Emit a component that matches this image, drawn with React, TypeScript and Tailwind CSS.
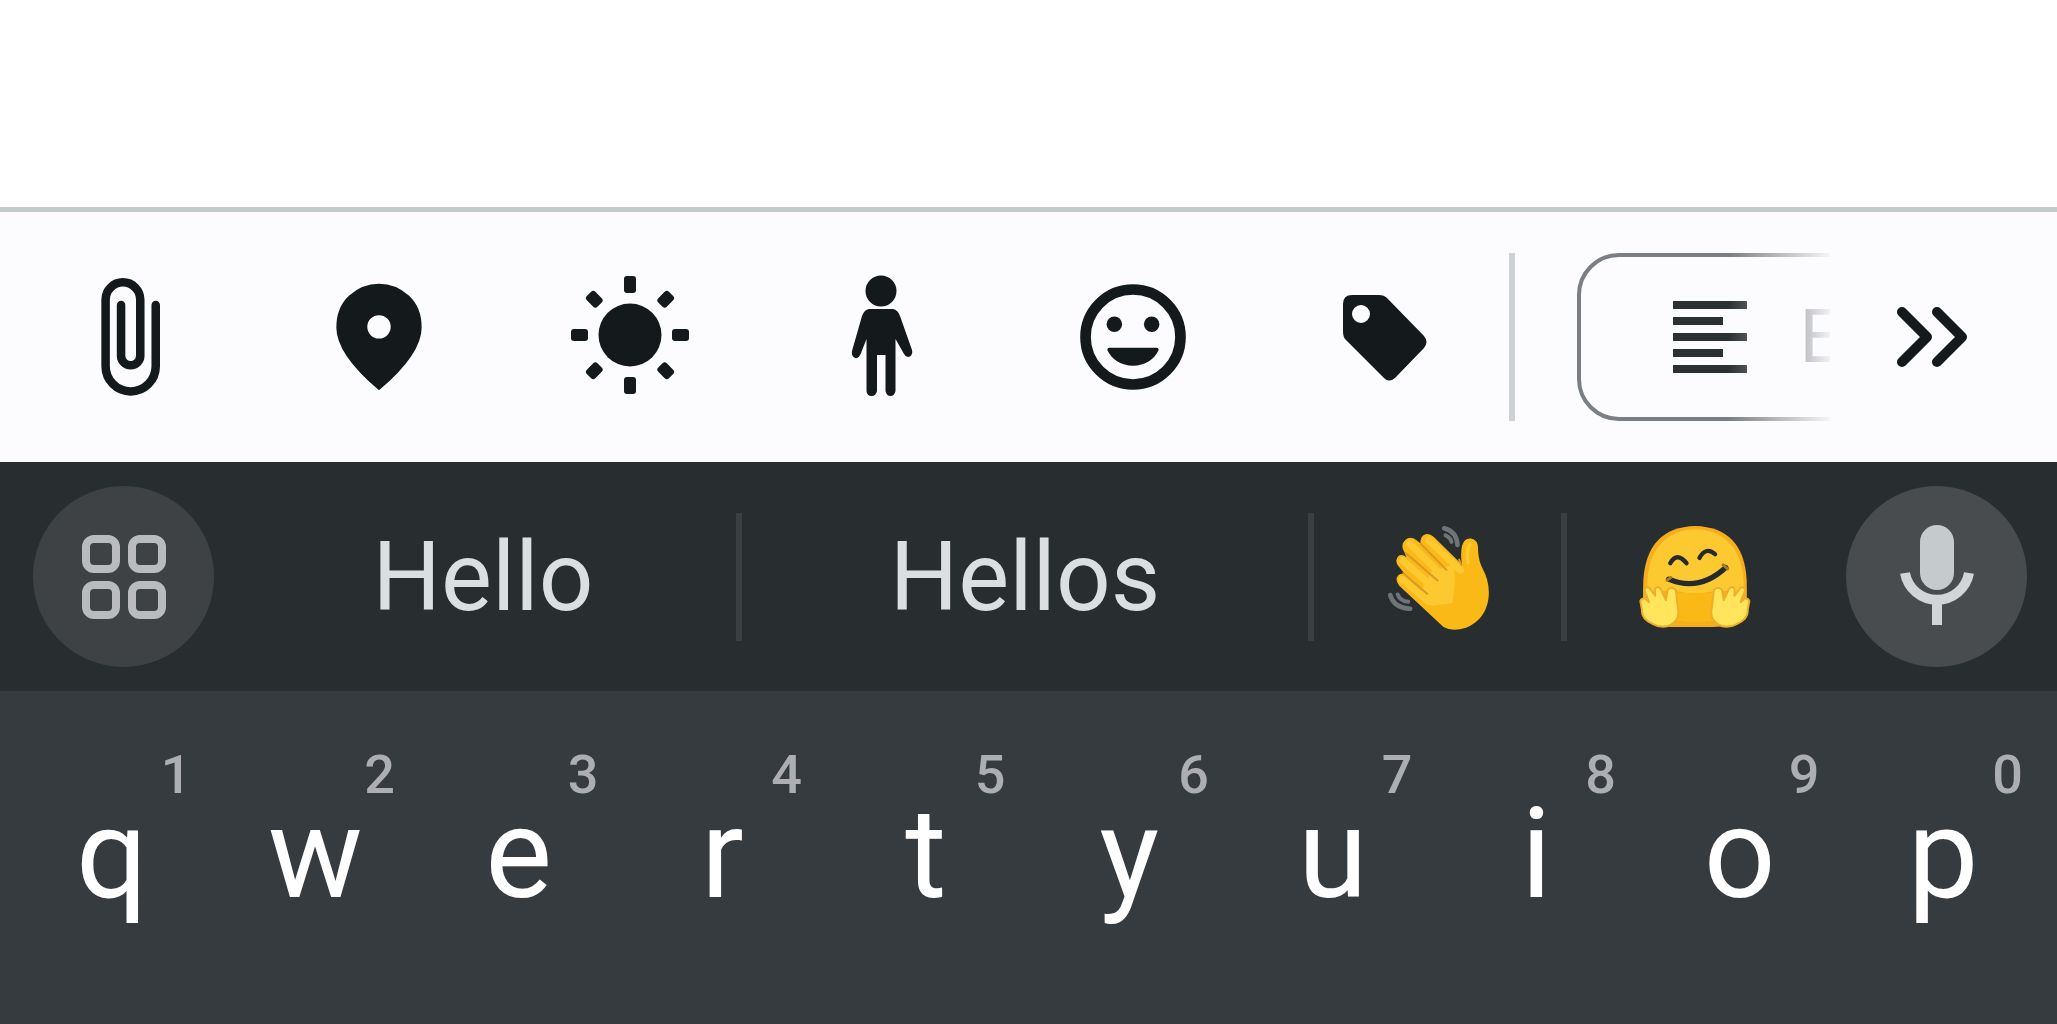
import type { ReactNode } from 'react';

const keys = [
  { letter: 'q', digit: '1' },
  { letter: 'w', digit: '2' },
  { letter: 'e', digit: '3' },
  { letter: 'r', digit: '4' },
  { letter: 't', digit: '5' },
  { letter: 'y', digit: '6' },
  { letter: 'u', digit: '7' },
  { letter: 'i', digit: '8' },
  { letter: 'o', digit: '9' },
  { letter: 'p', digit: '0' },
];

interface ToolButtonProps {
  label: string;
  viewBox?: string;
  children: ReactNode;
}

function ToolButton({ label, viewBox = '0 0 128 128', children }: ToolButtonProps) {
  return (
    <button type="button" aria-label={label} className="flex items-center justify-center">
      <svg className="h-32 w-32" viewBox={viewBox} fill="currentColor">
        {children}
      </svg>
    </button>
  );
}

function Toolbar() {
  return (
    <div className="grid grid-cols-[repeat(6,251fr)_6px_314fr_227fr] items-center border-t-[5px] border-[#c5cacd] bg-[#fcfcff] py-[41px] pl-0.5 text-[#14191c]">
      <ToolButton label="Attach file" viewBox="0 0 24 24">
        <path
          d="M17.2 6v11.5c0 2.6-2.1 4.7-4.7 4.7s-4.7-2.1-4.7-4.7V5a3.25 3.25 0 0 1 6.5 0v10.5a1.8 1.8 0 0 1-3.6 0V6"
          fill="none"
          stroke="currentColor"
          strokeWidth={1.6}
          strokeLinecap="round"
        />
      </ToolButton>
      <ToolButton label="Location" viewBox="0 0 24 24">
        <path
          fillRule="evenodd"
          d="M12 22q-4.025-3.425-6.012-6.362T4 10.2q0-3.75 2.413-5.975T12 2t5.588 2.225T20 10.2q0 2.5-1.987 5.438T12 22zM12 7.9a2.2 2.2 0 1 0 0 4.4 2.2 2.2 0 0 0 0-4.4z"
        />
      </ToolButton>
      <ToolButton label="Weather">
        <circle cx="64" cy="62" r="31.5" />
        {[0, 90, 180, 270].map((angle) => (
          <rect key={angle} x="58" y="3" width="12" height="17" rx="3" transform={`rotate(${angle} 64 62)`} />
        ))}
        {[45, 135, 225, 315].map((angle) => (
          <rect key={angle} x="58" y="4" width="12" height="15" rx="3" transform={`rotate(${angle} 64 62)`} />
        ))}
      </ToolButton>
      <ToolButton label="Activity">
        <circle cx="64" cy="18" r="15.5" />
        <path d="M52 36h24q5 1 7 7l12 34q1 4-2 6.500-4 1.500-6-2.500L78.500 66v52q-1 5-5 5t-5-5V82h-8.500v36q-1 5-5.500 5t-5-5V66l-5.500 14q-2 6-6 5-4-2-3-7l10-35q2-6 7-7z" />
      </ToolButton>
      <ToolButton label="Emoji" viewBox="0 0 24 24">
        <circle cx="12" cy="12" r="8.9" fill="none" stroke="currentColor" strokeWidth={2} />
        <circle cx="8.500" cy="9.600" r="1.450" />
        <circle cx="15.500" cy="9.600" r="1.450" />
        <path d="M12 17.400c2.200 0 4-1.200 4.750-2.800.15-.35 0-.6-.35-.6H7.600c-.35 0-.5.250-.35.600C8 16.200 9.800 17.400 12 17.400z" />
      </ToolButton>
      <ToolButton label="Tag">
        <path
          fillRule="evenodd"
          d="M32 22h27q5 0 8 3l37 38q5 6 0 12l-29 30q-6 5-11 0L26 67q-3-3-3-8V31q0-9 9-9zM41 32a9 9 0 1 0 0 18 9 9 0 0 0 0-18z"
        />
      </ToolButton>
      <div className="h-[168px] bg-[#cdd1d4]" />
      <div className="ml-[62px] overflow-hidden [mask-image:linear-gradient(to_right,black_60%,transparent_102%)]">
        <button
          type="button"
          aria-label="Entry template"
          className="flex h-[168px] w-[360px] items-center rounded-[42px] border-4 border-[#7b7e82] pl-[92px] text-[#2b3033]"
        >
          <svg className="h-[72px] w-[74px] shrink-0" viewBox="0 0 74 72" fill="currentColor">
            <path d="M0 0h74v8H0zM0 16h50v8H0zM0 32h74v8H0zM0 48h50v8H0zM0 64h74v8H0z" />
          </svg>
          <span className="ml-[52px] text-[74px] leading-none">E</span>
        </button>
      </div>
      <button type="button" aria-label="More tools" className="flex items-center justify-center pr-6">
        <svg className="h-[62px] w-[74px]" viewBox="0 0 74 62" fill="none" stroke="currentColor" strokeWidth={10} strokeLinecap="round" strokeLinejoin="round">
          <path d="M8 6l25 25L8 56M43 6l25 25-25 25" />
        </svg>
      </button>
    </div>
  );
}

function WavingHand() {
  return (
    <svg className="h-[108px] w-[107px]" viewBox="70 60 320 325">
      <g fill="none" stroke="#6f7477" strokeLinecap="round">
        <path d="M250 76q38 10 40 50" strokeWidth={14} />
        <path d="M254 97q16 8 18 20" strokeWidth={12} />
        <path d="M88 277q10 38 60 41" strokeWidth={14} />
        <path d="M110 275q8 20 32 22" strokeWidth={12} />
      </g>
      <path
        fill="#fbb917"
        d="M248 373L115 249q-15-20-3-32 9-7 20-3l-18-22q-15-19-2-32 10-8 25 3l-8-18q-11-20 4-34 15-13 34 1l12 10q-2-18 10-26 14-8 30 6l85 84q-6-30 0-58 7-23 26-21 24 4 22 35 2 34 14 56 24 45 17 92-10 61-67 85-42 13-68-2z"
      />
      <path
        fill="none"
        stroke="#fdc931"
        strokeWidth={21}
        strokeLinecap="round"
        d="M146 122l99 97M204 112l95 90M126 173l101 90M124 230l78 66"
      />
      <path fill="#fdc931" d="M212 207l66-23 5 50-8 67-63 9-38-32z" />
      <path
        fill="none"
        stroke="#d79a25"
        strokeWidth={6}
        strokeLinecap="round"
        d="M135 151l95 82M127 211l72 62M180 123l77 78M302 186l-7-16"
      />
      <path fill="none" stroke="#fdc931" strokeWidth={10} strokeLinecap="round" d="M328 122q-12 20-6 58" />
    </svg>
  );
}

function HuggingFace() {
  return (
    <svg className="h-[107px] w-[115px]" viewBox="830 70 346 320">
      <path fill="#f5ae1c" d="M850 350q-3-45-1-110Q860 82 1005 78q146 4 155 162 2 65-3 110-40 32-100 32H950q-66 0-100-32z" />
      <path fill="#fdc931" d="M861 285q-3-75 16-115 37-80 128-82 94 2 130 82 20 43 15 115-50-25-145 0-95-25-144 0z" />
      <path fill="#fbb917" d="M949 280h110l10 82q-65 12-120 0z" />
      <g fill="none" stroke="#252b2d" strokeLinecap="round">
        <path d="M930 190q20-36 49 0M1018 174q20-36 47-11" strokeWidth={13} />
        <path d="M925 238q92 39 172-35" strokeWidth={16} />
      </g>
      <path fill="none" stroke="#a77820" strokeWidth={9} strokeLinecap="round" d="M920 241l12-8M1089 195l14 12" />
      <g fill="#ffe45c" stroke="#edaf28" strokeWidth={6} strokeLinejoin="round">
        <path d="M878 373q-36-16-33-42l-5-27q4-10 15-7l11 10-13-35q2-12 13-9l19 25-1-20q7-12 17-1l16 34 5-30q12-14 25 0l6 54q8 32-20 50-25 14-55-2z" />
        <path d="M1130 373q36-16 33-42l5-27q-4-10-15-7l-11 10 13-35q-2-12-13-9l-19 25 1-20q-7-12-17-1l-16 34-5-30q-12-14-25 0l-6 54q-8 32 20 50 25 14 55-2z" />
      </g>
    </svg>
  );
}

function SuggestionStrip() {
  return (
    <div className="grid grid-cols-[181px_522fr_6px_566fr_6px_247fr_6px_279fr_181px] items-center bg-[#282d30] py-6 pr-[30px] pl-[33px] text-[96px] leading-none text-[#dcdfe2]">
      <button type="button" aria-label="Keyboard features" className="flex h-[181px] items-center justify-center rounded-full bg-[#3f4245] text-[#b9bbbe]">
        <svg className="h-[86px] w-[86px]" viewBox="0 0 86 86" fill="none" stroke="currentColor" strokeWidth={8}>
          <rect x="5" y="5" width="30" height="30" rx="8" />
          <rect x="51" y="5" width="30" height="30" rx="8" />
          <rect x="5" y="51" width="30" height="30" rx="8" />
          <rect x="51" y="51" width="30" height="30" rx="8" />
        </svg>
      </button>
      <button type="button" className="pl-4">Hello</button>
      <div className="h-32 bg-[#3b3f42]" />
      <button type="button">Hellos</button>
      <div className="h-32 bg-[#3b3f42]" />
      <button type="button" aria-label="Waving hand" className="flex justify-center">
        <WavingHand />
      </button>
      <div className="h-32 bg-[#3b3f42]" />
      <button type="button" aria-label="Hugging face" className="flex justify-center pr-6">
        <HuggingFace />
      </button>
      <button type="button" aria-label="Voice typing" className="flex h-[181px] items-center justify-center rounded-full bg-[#484c4f]">
        <svg className="h-[106px] w-[78px]" viewBox="0 0 78 106" fill="none">
          <rect x="22" y="1" width="34" height="65" rx="17" fill="#c5cacd" />
          <path d="M7 49a32.500 32.500 0 0 0 64 0M39 79v22" stroke="#d2d5d8" strokeWidth={10} />
        </svg>
      </button>
    </div>
  );
}

function KeyRow() {
  return (
    <div className="grid flex-1 grid-cols-10 content-start bg-[#363b3f] pt-[54px] pr-3 pl-2.5">
      {keys.map(({ letter, digit }) => (
        <button key={letter} type="button" className="flex flex-col text-center">
          <span className="w-full pr-[22px] text-right text-[54px] leading-[60px] font-medium text-[#acaeb1]">{digit}</span>
          <span className="w-full text-[126px] leading-[98px] text-white">{letter}</span>
        </button>
      ))}
    </div>
  );
}

export default function App() {
  return (
    <div className="flex min-h-screen flex-col bg-white font-[Roboto,sans-serif]">
      <main className="h-[207px]" />
      <Toolbar />
      <SuggestionStrip />
      <KeyRow />
    </div>
  );
}
